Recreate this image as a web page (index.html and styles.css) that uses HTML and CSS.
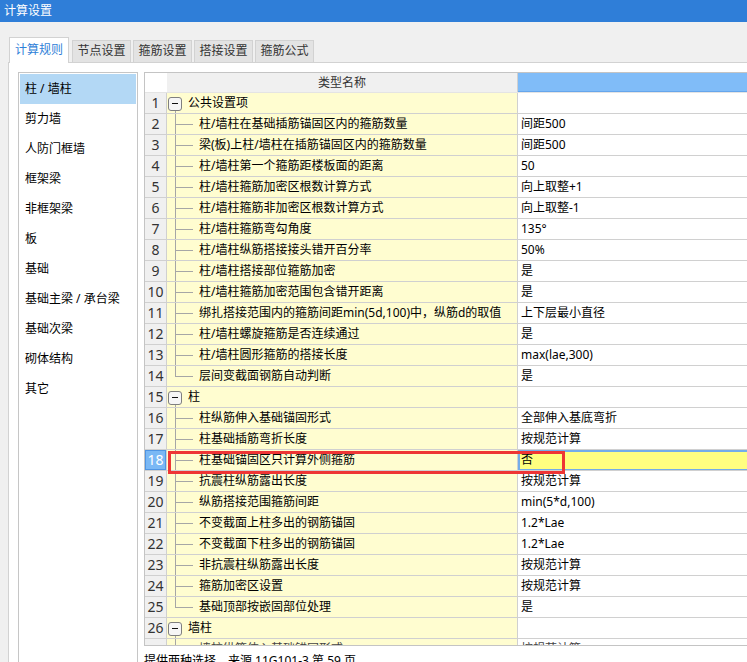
FILE: index.html
```html
<!DOCTYPE html>
<html lang="zh-CN">
<head>
<meta charset="utf-8">
<title>计算设置</title>
<link rel="stylesheet" href="styles.css">
</head>
<body>
<div class="titlebar">计算设置</div>
<div class="main">
  <div class="tabs">
    <div class="tab active">计算规则</div>
    <div class="tab">节点设置</div>
    <div class="tab">箍筋设置</div>
    <div class="tab">搭接设置</div>
    <div class="tab">箍筋公式</div>
  </div>
  <div class="panel">
    <ul class="list">
      <li class="sel">柱 / 墙柱</li>
      <li>剪力墙</li>
      <li>人防门框墙</li>
      <li>框架梁</li>
      <li>非框架梁</li>
      <li>板</li>
      <li>基础</li>
      <li>基础主梁 / 承台梁</li>
      <li>基础次梁</li>
      <li>砌体结构</li>
      <li>其它</li>
    </ul>
    <div class="right">
      <div class="grid">
        <div class="row head">
          <div class="rn"></div>
          <div class="nm hd">类型名称</div>
          <div class="val hdsel"></div>
        </div>
        <div class="gbody">
          <div class="row"><div class="rn">1</div><div class="nm"><span class="grp"><span class="box"></span></span>公共设置项</div><div class="val"></div></div>
          <div class="row"><div class="rn">2</div><div class="nm"><span class="tree"></span>柱/墙柱在基础插筋锚固区内的箍筋数量</div><div class="val">间距500</div></div>
          <div class="row"><div class="rn">3</div><div class="nm"><span class="tree"></span>梁(板)上柱/墙柱在插筋锚固区内的箍筋数量</div><div class="val">间距500</div></div>
          <div class="row"><div class="rn">4</div><div class="nm"><span class="tree"></span>柱/墙柱第一个箍筋距楼板面的距离</div><div class="val">50</div></div>
          <div class="row"><div class="rn">5</div><div class="nm"><span class="tree"></span>柱/墙柱箍筋加密区根数计算方式</div><div class="val">向上取整+1</div></div>
          <div class="row"><div class="rn">6</div><div class="nm"><span class="tree"></span>柱/墙柱箍筋非加密区根数计算方式</div><div class="val">向上取整-1</div></div>
          <div class="row"><div class="rn">7</div><div class="nm"><span class="tree"></span>柱/墙柱箍筋弯勾角度</div><div class="val">135°</div></div>
          <div class="row"><div class="rn">8</div><div class="nm"><span class="tree"></span>柱/墙柱纵筋搭接接头错开百分率</div><div class="val">50%</div></div>
          <div class="row"><div class="rn">9</div><div class="nm"><span class="tree"></span>柱/墙柱搭接部位箍筋加密</div><div class="val">是</div></div>
          <div class="row"><div class="rn">10</div><div class="nm"><span class="tree"></span>柱/墙柱箍筋加密范围包含错开距离</div><div class="val">是</div></div>
          <div class="row"><div class="rn">11</div><div class="nm"><span class="tree"></span>绑扎搭接范围内的箍筋间距min(5d,100)中，纵筋d的取值</div><div class="val">上下层最小直径</div></div>
          <div class="row"><div class="rn">12</div><div class="nm"><span class="tree"></span>柱/墙柱螺旋箍筋是否连续通过</div><div class="val">是</div></div>
          <div class="row"><div class="rn">13</div><div class="nm"><span class="tree"></span>柱/墙柱圆形箍筋的搭接长度</div><div class="val">max(lae,300)</div></div>
          <div class="row"><div class="rn">14</div><div class="nm"><span class="tree last"></span>层间变截面钢筋自动判断</div><div class="val">是</div></div>
          <div class="row"><div class="rn">15</div><div class="nm"><span class="grp"><span class="box"></span></span>柱</div><div class="val"></div></div>
          <div class="row"><div class="rn">16</div><div class="nm"><span class="tree"></span>柱纵筋伸入基础锚固形式</div><div class="val">全部伸入基底弯折</div></div>
          <div class="row"><div class="rn">17</div><div class="nm"><span class="tree"></span>柱基础插筋弯折长度</div><div class="val">按规范计算</div></div>
          <div class="row cur"><div class="rn">18</div><div class="nm"><span class="tree"></span>柱基础锚固区只计算外侧箍筋</div><div class="val">否</div><div class="mark"></div></div>
          <div class="row"><div class="rn">19</div><div class="nm"><span class="tree"></span>抗震柱纵筋露出长度</div><div class="val">按规范计算</div></div>
          <div class="row"><div class="rn">20</div><div class="nm"><span class="tree"></span>纵筋搭接范围箍筋间距</div><div class="val">min(5*d,100)</div></div>
          <div class="row"><div class="rn">21</div><div class="nm"><span class="tree"></span>不变截面上柱多出的钢筋锚固</div><div class="val">1.2*Lae</div></div>
          <div class="row"><div class="rn">22</div><div class="nm"><span class="tree"></span>不变截面下柱多出的钢筋锚固</div><div class="val">1.2*Lae</div></div>
          <div class="row"><div class="rn">23</div><div class="nm"><span class="tree"></span>非抗震柱纵筋露出长度</div><div class="val">按规范计算</div></div>
          <div class="row"><div class="rn">24</div><div class="nm"><span class="tree"></span>箍筋加密区设置</div><div class="val">按规范计算</div></div>
          <div class="row"><div class="rn">25</div><div class="nm"><span class="tree last"></span>基础顶部按嵌固部位处理</div><div class="val">是</div></div>
          <div class="row"><div class="rn">26</div><div class="nm"><span class="grp"><span class="box"></span></span>墙柱</div><div class="val"></div></div>
          <div class="row partial"><div class="rn"></div><div class="nm"><span class="tree"></span>墙柱纵筋伸入基础锚固形式</div><div class="val">按规范计算</div></div>
        </div>
      </div>
      <div class="status">提供两种选择，来源 11G101-3 第 59 页</div>
    </div>
  </div>
</div>
</body>
</html>
```

FILE: styles.css
```css
* { box-sizing: border-box; }
html, body { margin: 0; height: 100%; overflow: hidden; }
body {
  font-family: "Noto Sans", "Noto Sans CJK SC", sans-serif;
  font-size: 12px;
  color: #000;
  background: #f0f0f0;
}
.titlebar {
  height: 22px;
  line-height: 21px;
  background: #2f7ed8;
  color: #fff;
  padding-left: 4px;
}
.main { padding: 15px 0 0 8px; }
.tabs {
  display: flex;
  align-items: flex-end;
  height: 25px;
  padding-left: 1px;
  gap: 2px;
}
.tab {
  height: 22px;
  width: 59px;
  background: #e3e3e3;
  border: 1px solid #d2d2d2;
  border-bottom: none;
  text-align: center;
  line-height: 20px;
  color: #333;
}
.tab.active {
  height: 26px;
  width: 60px;
  margin-right: 1px;
  margin-bottom: -1px;
  background: #fff;
  color: #2f7fd8;
  line-height: 24px;
  position: relative;
  z-index: 1;
}
.panel {
  display: flex;
  gap: 6px;
  height: 720px;
  padding: 9px 0 0 9px;
  background: #fff;
  border: 1px solid #d2d2d2;
  border-right: none;
}
.list {
  list-style: none;
  margin: 0;
  padding: 1px;
  width: 120px;
  flex: none;
  border: 1px solid #c6c6c6;
  background: #fff;
}
.list li {
  height: 30px;
  line-height: 30px;
  padding-left: 5px;
}
.list li.sel { background: #b3d8f5; }
.right { display: flex; flex-direction: column; width: 700px; flex: none; }
.grid {
  border: 1px solid #c4c4c4;
  border-right: none;
  background: #fff;
}
.gbody { height: 552px; overflow: hidden; }
.row {
  display: flex;
  height: 21px;
  border-bottom: 1px solid #d0d0d0;
  position: relative;
}
.row.head { height: 20px; border-bottom-color: #e4e4e4; }
.rn {
  width: 22px;
  flex: none;
  background: #f0f0f0;
  border-right: 1px solid #d0d0d0;
  text-align: center;
  font-size: 14px;
  line-height: 20px;
  color: #333;
}
.head .rn { background: #fff; border-right-color: #fff; }
.nm {
  width: 351px;
  flex: none;
  display: flex;
  align-items: center;
  background: #fffdd0;
  border-right: 1px solid #d0d0d0;
  white-space: nowrap;
  overflow: hidden;
  line-height: 20px;
}
.nm.hd {
  justify-content: center;
  background: #f0f0f0;
  color: #333;
}
.val {
  flex: 1;
  padding-left: 3px;
  line-height: 20px;
  white-space: nowrap;
  background: #fff;
}
.val.hdsel {
  background: #80bcf8;
  box-shadow: inset 0 -1px #66a6ec;
}
.tree, .grp {
  align-self: stretch;
  flex: none;
  position: relative;
}
.tree { width: 32px; }
.grp { width: 21px; }
.tree::before {
  content: "";
  position: absolute;
  left: 8px;
  top: 0;
  bottom: -1px;
  border-left: 1px solid #a6a6a6;
}
.tree.last::before { bottom: 10px; }
.tree::after {
  content: "";
  position: absolute;
  left: 8px;
  width: 18px;
  top: 10px;
  border-top: 1px solid #a6a6a6;
}
.grp::after {
  content: "";
  position: absolute;
  left: 8px;
  top: 18px;
  bottom: -1px;
  border-left: 1px solid #a6a6a6;
}
.box {
  position: absolute;
  left: 1px;
  top: 4px;
  width: 14px;
  height: 14px;
  border: 1px solid #7f7f7f;
  border-radius: 3px;
  background: #f6f6f6;
}
.box::before {
  content: "";
  position: absolute;
  left: 3px;
  right: 3px;
  top: 5px;
  border-top: 1px solid #111;
}
.cur .rn {
  background: #7ab8f5;
  color: #fff;
  box-shadow: inset 0 0 0 1px #4f95e3;
}
.cur .val {
  background: #ffff80;
  box-shadow: inset 0 2px #74ade9, inset 0 -1px #74ade9, inset 2px 0 #74ade9;
}
.mark {
  position: absolute;
  z-index: 5;
  left: 23px;
  top: 1px;
  width: 397px;
  height: 23px;
  border: 3px solid #ee3535;
}
.partial .nm, .partial .val { color: #444; }
.status {
  margin-top: 6px;
  line-height: 18px;
  color: #000;
}
```
